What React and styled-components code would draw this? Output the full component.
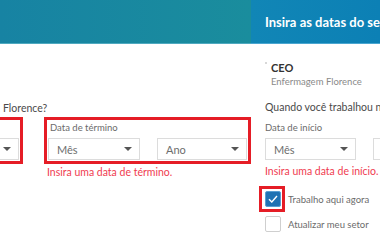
import React from "react";
import styled, { createGlobalStyle } from "styled-components";

const Global = createGlobalStyle`
  html, body { margin: 0; padding: 0; background: #fff; }
  body { font-family: Lato, "Open Sans", sans-serif; }
  * { box-sizing: border-box; }
`;

const Page = styled.div`
  display: flex;
  width: 380px;
  height: 249px;
  overflow: hidden;
  background: #fff;
`;

const Panel = styled.section`
  flex: 0 0 ${(p) => p.$w}px;
  display: flex;
  flex-direction: column;
  overflow: hidden;
  background: #fff;
`;

const Header = styled.header`
  height: 44px;
  flex: 0 0 44px;
  display: flex;
  align-items: center;
  padding-left: 14px;
  background: ${(p) => p.$bg};
  border-bottom: 1px solid ${(p) => p.$line};
  color: #fff;
  font-weight: 700;
  font-size: 13px;
  white-space: nowrap;
`;

const Body = styled.div`
  display: flex;
  flex-direction: column;
  align-items: flex-start;
  padding-left: ${(p) => p.$pl}px;
`;

const Question = styled.div`
  margin-top: ${(p) => p.$mt}px;
  padding-left: ${(p) => p.$pl || 0}px;
  font-size: 10.5px;
  line-height: 14px;
  color: #4a4a4a;
  white-space: nowrap;
`;

const FieldRow = styled.div`
  align-self: stretch;
  display: flex;
  justify-content: flex-end;
  gap: 21px;
  margin-top: 2px;
`;

const DateField = styled.div`
  flex-shrink: 0;
  width: ${(p) => p.$w}px;
  display: flex;
  flex-direction: column;
  margin-top: ${(p) => p.$mt || 0}px;
  padding: ${(p) => (p.$flag ? "2px 3px 1px 1px" : "2px 0 1px 0")};
  border: ${(p) => (p.$flag ? "3px solid #e51d26" : "none")};
`;

const FieldLabel = styled.div`
  padding-left: ${(p) => (p.$flush ? 0 : 2)}px;
  font-size: 9.5px;
  line-height: 12px;
  color: #6b6b6b;
  white-space: nowrap;
  margin-bottom: 4px;
`;

const Selects = styled.div`
  display: flex;
  gap: ${(p) => p.$gap}px;
`;

const Select = styled.div`
  flex: 0 0 ${(p) => p.$w}px;
  height: 22px;
  display: flex;
  align-items: center;
  justify-content: space-between;
  padding: 0 7px 0 8px;
  border: 1px solid #dcdcdc;
  font-size: 11px;
  color: #6e6e6e;
  background: #fff;
`;

const Caret = styled.span`
  width: 0;
  height: 0;
  border-left: 4px solid transparent;
  border-right: 4px solid transparent;
  border-top: 4px solid #555;
`;

const ErrorText = styled.div`
  margin-top: ${(p) => p.$mt ?? 4}px;
  padding-left: ${(p) => p.$pl || 0}px;
  font-size: 10.5px;
  line-height: 14px;
  color: #f03c50;
  white-space: nowrap;
`;

const Company = styled.div`
  display: flex;
  gap: 4px;
  margin-top: 17px;
`;

const LogoDot = styled.span`
  width: 2px;
  height: 2px;
  margin-top: 1px;
  background: #d8d8d8;
`;

const CompanyText = styled.div`
  display: flex;
  flex-direction: column;
  white-space: nowrap;
`;

const Role = styled.div`
  font-size: 11px;
  line-height: 14px;
  font-weight: 700;
  color: #333;
`;

const CompanyName = styled.div`
  font-size: 9.5px;
  line-height: 14px;
  color: #8a8a8a;
`;

const Checks = styled.div`
  display: flex;
  flex-direction: column;
  gap: 9px;
  margin-top: 13px;
`;

const CheckRow = styled.label`
  position: relative;
  display: flex;
  align-items: center;
  gap: 7px;
  font-size: 9.5px;
  color: #6b6b6b;
  white-space: nowrap;
`;

const Box = styled.span`
  flex: 0 0 16px;
  width: 16px;
  height: 16px;
  border-radius: 2px;
  display: flex;
  align-items: center;
  justify-content: center;
  border: 1px solid ${(p) => (p.$on ? "#5a9fd2" : "#cfcfcf")};
  background: ${(p) => (p.$on ? "#1f72b3" : "#fff")};
`;

const Flag = styled.span`
  position: absolute;
  left: -6px;
  top: -5px;
  width: 26px;
  height: 26px;
  border: 3px solid #e51d26;
  pointer-events: none;
`;

function DateSelects({ w1, w2, gap }) {
  return (
    <Selects $gap={gap}>
      <Select $w={w1}>
        <span>Mês</span>
        <Caret />
      </Select>
      <Select $w={w2}>
        <span>Ano</span>
        <Caret />
      </Select>
    </Selects>
  );
}

export default function App() {
  return (
    <Page>
      <Global />
      <Panel $w={251}>
        <Header
          $bg="linear-gradient(90deg, #1783a3 0%, #1a8d9d 100%)"
          $line="#4fa9bf"
        />
        <Body $pl={0}>
          <Question $mt={57} $pl={3}>
            Florence?
          </Question>
          <FieldRow>
            <DateField $flag $w={207}>
              <FieldLabel>Data de início</FieldLabel>
              <DateSelects w1={92} w2={90} gap={17} />
            </DateField>
            <DateField $flag $w={207}>
              <FieldLabel>Data de término</FieldLabel>
              <DateSelects w1={92} w2={90} gap={17} />
            </DateField>
          </FieldRow>
          <ErrorText $pl={47} $mt={1}>Insira uma data de término.</ErrorText>
        </Body>
      </Panel>
      <Panel $w={129}>
        <Header $bg="linear-gradient(90deg, #1186b6 0%, #0c80b5 100%)" $line="#4aa6d0">
          Insira as datas do setor
        </Header>
        <Body $pl={14}>
          <Company>
            <LogoDot />
            <CompanyText>
              <Role>CEO</Role>
              <CompanyName>Enfermagem Florence</CompanyName>
            </CompanyText>
          </Company>
          <Question $mt={11}>Quando você trabalhou na Enfermagem Florence?</Question>
          <DateField $w={220} $mt={6}>
            <FieldLabel $flush>Data de início</FieldLabel>
            <DateSelects w1={91} w2={91} gap={17} />
          </DateField>
          <ErrorText $mt={3}>Insira uma data de início.</ErrorText>
          <Checks>
            <CheckRow>
              <Box $on>
                <svg width="10" height="8" viewBox="0 0 10 8">
                  <path d="M1 4.2 L3.8 7 L9 1" fill="none" stroke="#fff" strokeWidth="1.4" />
                </svg>
              </Box>
              <Flag />
              Trabalho aqui agora
            </CheckRow>
            <CheckRow>
              <Box />
              Atualizar meu setor
            </CheckRow>
          </Checks>
        </Body>
      </Panel>
    </Page>
  );
}
